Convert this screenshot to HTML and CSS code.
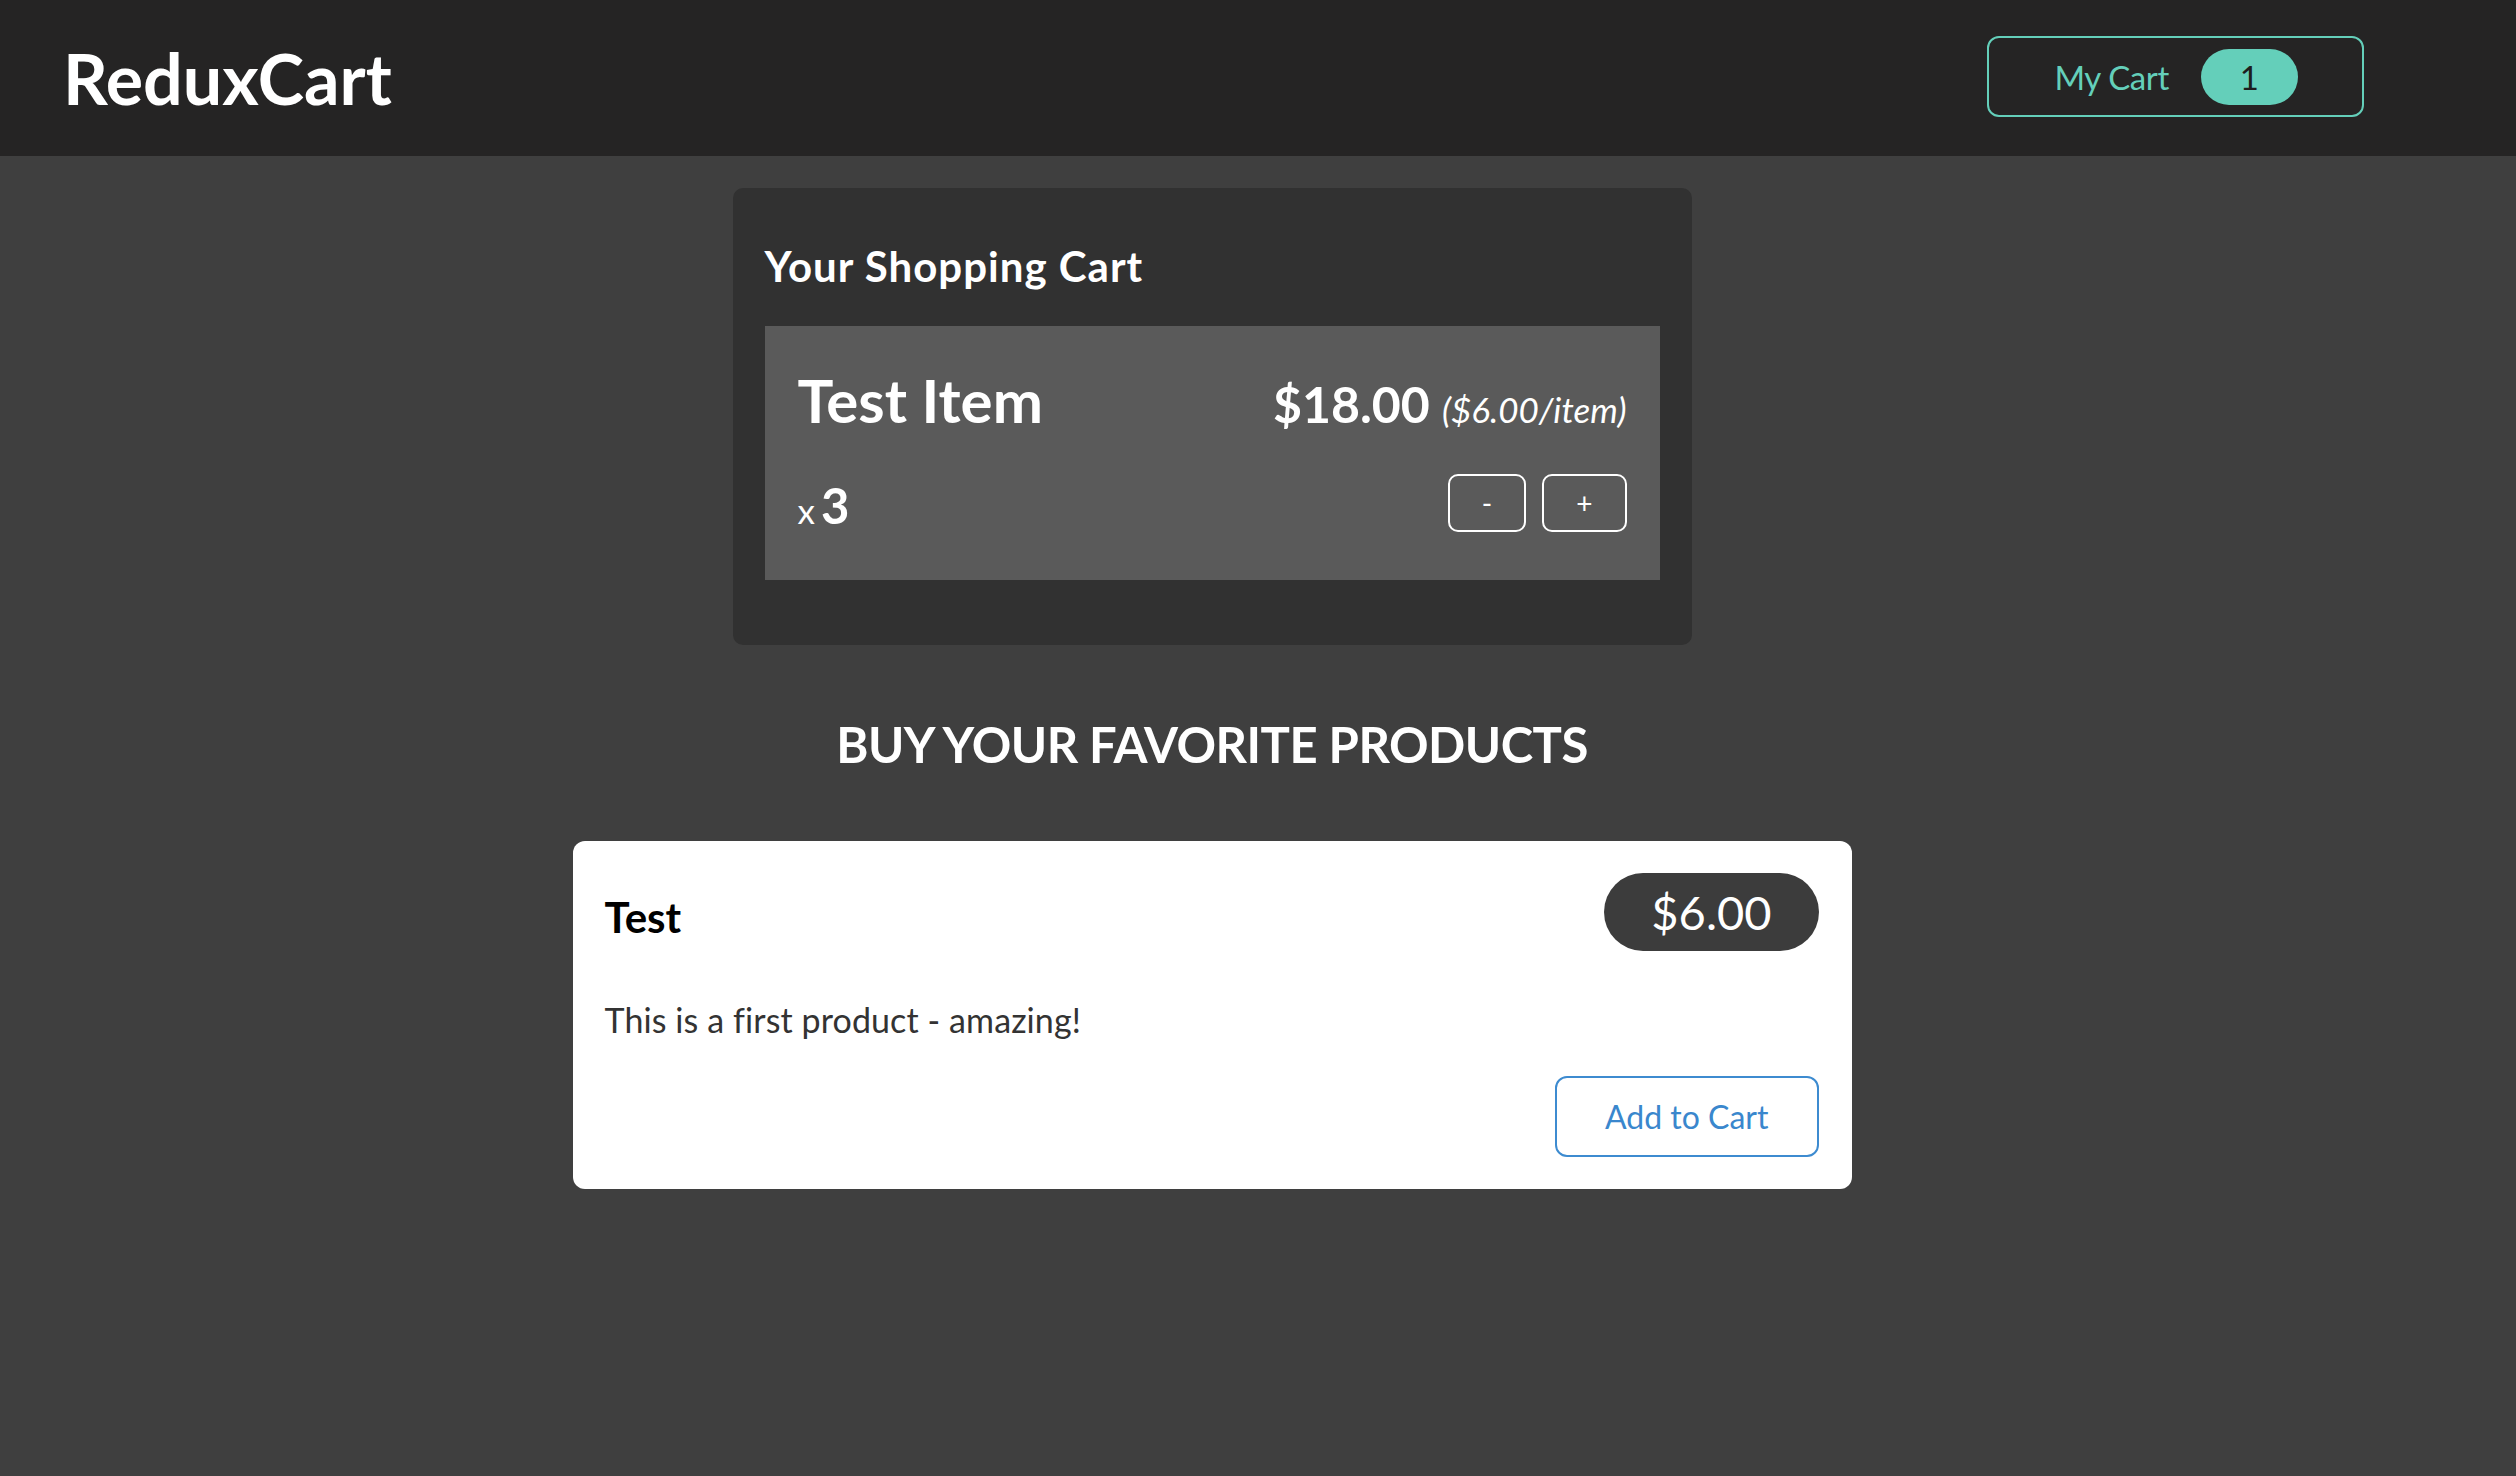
FILE: index.html
```html
<!DOCTYPE html>
<html lang="en">
<head>
<meta charset="utf-8">
<title>ReduxCart</title>
<link rel="stylesheet" href="styles.css">
</head>
<body>
<header class="header">
  <h1 class="logo">ReduxCart</h1>
  <button class="cart-button">
    <span>My Cart</span>
    <span class="cart-badge">1</span>
  </button>
</header>
<main class="main">
  <section class="cart">
    <h2 class="cart-title">Your Shopping Cart</h2>
    <ul class="cart-list">
      <li class="item">
        <div class="item-top">
          <h3 class="item-name">Test Item</h3>
          <div class="item-price">$18.00 <span class="item-unit">($6.00/item)</span></div>
        </div>
        <div class="item-bottom">
          <div class="item-qty">x <span class="item-qty-num">3</span></div>
          <div class="item-actions">
            <button class="qty-button">-</button>
            <button class="qty-button">+</button>
          </div>
        </div>
      </li>
    </ul>
  </section>
  <section class="products">
    <h2 class="products-title">Buy your favorite products</h2>
    <ul class="product-list">
      <li class="card">
        <div class="card-top">
          <h3 class="card-name">Test</h3>
          <div class="card-price">$6.00</div>
        </div>
        <p class="card-desc">This is a first product - amazing!</p>
        <div class="card-actions">
          <button class="add-button">Add to Cart</button>
        </div>
      </li>
    </ul>
  </section>
</main>
</body>
</html>
```
FILE: styles.css
```css
* { box-sizing: border-box; }
html, body { height: 100%; }
body {
  margin: 0;
  background: #3f3f3f;
  font-family: Lato, "Open Sans", sans-serif;
  color: #fff;
}
button { font-family: inherit; cursor: pointer; }

.header {
  height: 156px;
  background: #252424;
  display: flex;
  justify-content: space-between;
  align-items: center;
  padding: 0 152px 0 63px;
}
.logo {
  margin: 0;
  font-size: 70px;
  font-weight: 700;
  line-height: 1;
  color: #fff;
}
.cart-button {
  height: 81px;
  display: flex;
  align-items: center;
  padding: 0 64px 0 65px;
  margin-top: -3px;
  background: transparent;
  border: 2px solid #64cfba;
  border-radius: 12px;
  color: #64cfba;
  font-size: 33px;
  letter-spacing: -0.4px;
}
.cart-badge {
  height: 56px;
  display: inline-flex;
  align-items: center;
  padding: 0 39px;
  margin-left: 32px;
  border-radius: 28px;
  background: #64cfba;
  color: #1d1d1d;
  letter-spacing: 0;
}

.main { padding: 32px 92px 0 0; }

.cart {
  width: 959px;
  margin: 0 auto;
  padding: 32px;
  background: #313131;
  border-radius: 10px;
}
.cart-title {
  margin: 21px 0 35px;
  font-size: 42px;
  font-weight: 700;
  line-height: 1.2;
  letter-spacing: 1px;
}
.cart-list { list-style: none; margin: 0 0 33px; padding: 0; }
.item {
  background: #5a5a5a;
  padding: 38px 33px 46px 33px;
}
.item-top {
  display: flex;
  justify-content: space-between;
  align-items: baseline;
}
.item-name {
  margin: 0;
  font-size: 60px;
  font-weight: 700;
  line-height: 72px;
}
.item-price {
  font-size: 50px;
  font-weight: 700;
}
.item-unit {
  font-size: 35px;
  font-weight: 400;
  font-style: italic;
}
.item-bottom {
  margin-top: 36px;
  display: flex;
  justify-content: space-between;
  align-items: center;
}
.item-qty {
  font-size: 35px;
  padding-top: 4px;
  word-spacing: -3px;
}
.item-qty-num {
  font-size: 49px;
  font-weight: 700;
}
.item-actions { display: flex; gap: 16px; }
.qty-button {
  height: 58px;
  padding: 0 32px;
  background: transparent;
  border: 2px solid #fff;
  border-radius: 10px;
  color: #fff;
  font-size: 28px;
}

.products-title {
  margin: 69px 0 67px;
  text-align: center;
  text-transform: uppercase;
  font-size: 49px;
  font-weight: 700;
  line-height: 60px;
  letter-spacing: -0.5px;
}
.product-list { list-style: none; margin: 0; padding: 0; }
.card {
  width: 1279px;
  margin: 0 auto;
  padding: 32px 33px 32px 32px;
  background: #fff;
  border-radius: 12px;
  color: #333;
}
.card-top {
  display: flex;
  justify-content: space-between;
  align-items: baseline;
}
.card-name {
  margin: 0;
  font-size: 42px;
  font-weight: 700;
  color: #000;
  position: relative;
  top: 3px;
}
.card-price {
  padding: 10px 47px;
  border-radius: 40px;
  background: #3c3c3c;
  color: #fff;
  font-size: 47px;
  line-height: 58px;
}
.card-desc {
  margin: 49px 0 36px;
  font-size: 34px;
  line-height: 40px;
  color: #333;
  letter-spacing: 0.1px;
}
.card-actions { display: flex; justify-content: flex-end; }
.add-button {
  height: 81px;
  padding: 0 48px;
  background: transparent;
  border: 2px solid #3d8bd0;
  border-radius: 12px;
  color: #3a87cd;
  font-size: 32px;
}
```
